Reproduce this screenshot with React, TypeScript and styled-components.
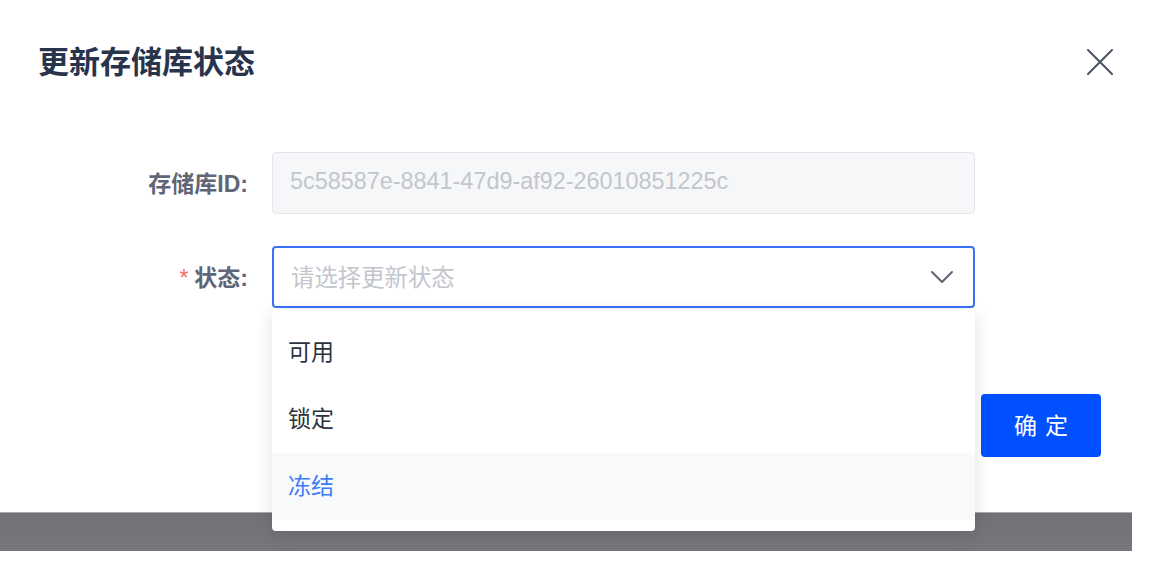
import React from "react";
import styled, { createGlobalStyle } from "styled-components";

const Global = createGlobalStyle`
  html, body { margin: 0; padding: 0; background: #ffffff; }
  body { font-family: "Liberation Sans", "Noto Sans CJK SC", sans-serif; }
  * { box-sizing: border-box; }
`;

const Page = styled.div`
  width: 1152px;
  height: 562px;
  background: #ffffff;
  overflow: hidden;
`;

const Dialog = styled.div`
  width: 1132px;
  height: 512px;
  background: #ffffff;
  display: flex;
  flex-direction: column;
`;

const Header = styled.div`
  display: flex;
  align-items: center;
  justify-content: space-between;
  padding: 37px 18px 0 38px;
  height: 82px;
`;

const Title = styled.h2`
  margin: 0;
  font-family: "Noto Sans CJK SC", sans-serif;
  font-size: 31px;
  line-height: 40px;
  font-weight: 700;
  color: #28344c;
`;

const CloseButton = styled.button`
  width: 28px;
  height: 28px;
  margin-top: 4px;
  padding: 0;
  border: none;
  background: transparent;
  display: flex;
  align-items: center;
  justify-content: center;
  cursor: pointer;
`;

const Form = styled.div`
  margin-top: 70px;
  display: flex;
  flex-direction: column;
  gap: 32px;
`;

const Row = styled.div`
  display: grid;
  grid-template-columns: 248px 703px;
  column-gap: 24px;
  align-items: center;
  height: 62px;
`;

const Label = styled.label`
  text-align: right;
  font-family: "Liberation Sans", "Noto Sans CJK SC", sans-serif;
  font-size: 23px;
  font-weight: 700;
  color: #5f6677;
  white-space: nowrap;
  padding-bottom: 2px;
`;

const Star = styled.span`
  color: #f56c6c;
  margin-right: 6px;
  font-weight: 400;
`;

const Field = styled.div<{ $focused?: boolean; $disabled?: boolean }>`
  position: relative;
  height: 62px;
  border-radius: 4px;
  border: ${(p) => (p.$focused ? "2px solid #3a6ff8" : "1px solid #e3e5ea")};
  background: ${(p) => (p.$disabled ? "#f6f7f9" : "#ffffff")};
  display: flex;
  align-items: center;
  justify-content: space-between;
  padding: 0 ${(p) => (p.$focused ? "19px" : "20px")} 0 17px;
`;

const FieldText = styled.span`
  font-family: "Liberation Sans", "Noto Sans CJK SC", sans-serif;
  font-size: 23.4px;
  color: #c3c6cd;
  white-space: nowrap;
  padding-bottom: 3px;
`;

const Dropdown = styled.ul`
  position: absolute;
  top: calc(100% + 4px);
  left: -2px;
  right: -2px;
  margin: 0;
  padding: 9px 0 11px;
  list-style: none;
  background: #ffffff;
  border-radius: 4px;
  box-shadow: 0 4px 18px rgba(0, 0, 0, 0.12);
  z-index: 10;
`;

const Option = styled.li<{ $active?: boolean }>`
  height: 67px;
  display: flex;
  align-items: center;
  padding: 0 0 5px 16px;
  font-family: "Noto Sans CJK SC", sans-serif;
  font-size: 23px;
  color: ${(p) => (p.$active ? "#3d7bf8" : "#2b3341")};
  background: ${(p) => (p.$active ? "#f8f9fa" : "#ffffff")};
`;

const Footer = styled.div`
  margin-top: 86px;
  display: flex;
  justify-content: flex-end;
  padding-right: 31px;
`;

const PrimaryButton = styled.button`
  width: 120px;
  height: 63px;
  border: none;
  border-radius: 4px;
  background: #0050ff;
  color: #ffffff;
  font-family: "Noto Sans CJK SC", sans-serif;
  font-size: 23px;
  letter-spacing: 8px;
  padding: 0 0 3px 8px;
  cursor: pointer;
`;

const Backdrop = styled.div`
  width: 1132px;
  height: 39px;
  background: linear-gradient(#a9aaab 0, #a9aaab 1px, #717275 1px, #76777a 100%);
`;

export default function App() {
  return (
    <Page>
      <Global />
      <Dialog>
        <Header>
          <Title>更新存储库状态</Title>
          <CloseButton aria-label="关闭">
            <svg width="28" height="28" viewBox="0 0 28 28" fill="none">
              <path d="M2 2 L26 26 M26 2 L2 26" stroke="#4a5466" strokeWidth="2" strokeLinecap="round" />
            </svg>
          </CloseButton>
        </Header>
        <Form>
          <Row>
            <Label>存储库ID:</Label>
            <Field $disabled>
              <FieldText>5c58587e-8841-47d9-af92-26010851225c</FieldText>
            </Field>
          </Row>
          <Row>
            <Label>
              <Star>*</Star>状态:
            </Label>
            <Field $focused>
              <FieldText>请选择更新状态</FieldText>
              <svg width="24" height="14" viewBox="0 0 24 14" fill="none">
                <path d="M2 2 L12 12 L22 2" stroke="#5d6472" strokeWidth="2" strokeLinecap="round" strokeLinejoin="round" />
              </svg>
              <Dropdown>
                <Option>可用</Option>
                <Option>锁定</Option>
                <Option $active>冻结</Option>
              </Dropdown>
            </Field>
          </Row>
        </Form>
        <Footer>
          <PrimaryButton>确定</PrimaryButton>
        </Footer>
      </Dialog>
      <Backdrop />
    </Page>
  );
}
